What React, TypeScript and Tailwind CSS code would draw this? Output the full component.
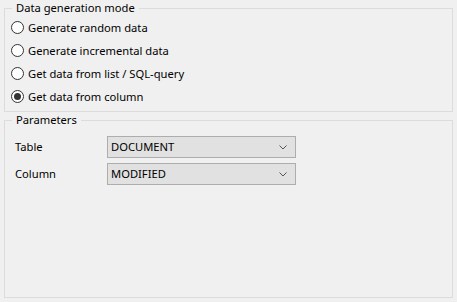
import React from 'react';

const modes = [
  'Generate random data',
  'Generate incremental data',
  'Get data from list / SQL-query',
  'Get data from column',
];

function Radio({ label, checked }: { label: string; checked?: boolean }) {
  return (
    <label className="flex h-[23px] items-center gap-[4px] pl-[6px]">
      <span className="flex h-[13px] w-[13px] items-center justify-center rounded-full border border-[#333] bg-white">
        {checked && <span className="h-[7px] w-[7px] rounded-full bg-[#333]" />}
      </span>
      <span>{label}</span>
    </label>
  );
}

function Combo({ value }: { value: string }) {
  return (
    <div className="flex h-[22px] w-[189px] items-center justify-between border border-[#adadad] bg-[#e1e1e1] pl-[3px] pr-[8px]">
      <span>{value}</span>
      <svg width="8" height="5" viewBox="0 0 8 5" className="text-[#555]">
        <path d="M0.5 0.5 L4 4 L7.5 0.5" fill="none" stroke="currentColor" strokeWidth="1" />
      </svg>
    </div>
  );
}

export default function App() {
  return (
    <div className="h-[302px] w-[457px] bg-[#f0f0f0] px-[4px] text-[11.2px] text-black font-['Noto_Sans',sans-serif] leading-[16px]">
      <fieldset className="h-[112px] border border-[#dcdcdc]">
        <legend className="ml-[7px] px-[4px]">Data generation mode</legend>
        {modes.map((m, i) => (
          <Radio key={m} label={m} checked={i === 3} />
        ))}
      </fieldset>
      <fieldset className="h-[186px] border border-[#dcdcdc]">
        <legend className="ml-[7px] px-[4px]">Parameters</legend>
        <div className="flex flex-col gap-[5px] pt-[8px] pl-[10px]">
          <div className="flex items-center">
            <span className="w-[92px]">Table</span>
            <Combo value="DOCUMENT" />
          </div>
          <div className="flex items-center">
            <span className="w-[92px]">Column</span>
            <Combo value="MODIFIED" />
          </div>
        </div>
      </fieldset>
    </div>
  );
}
